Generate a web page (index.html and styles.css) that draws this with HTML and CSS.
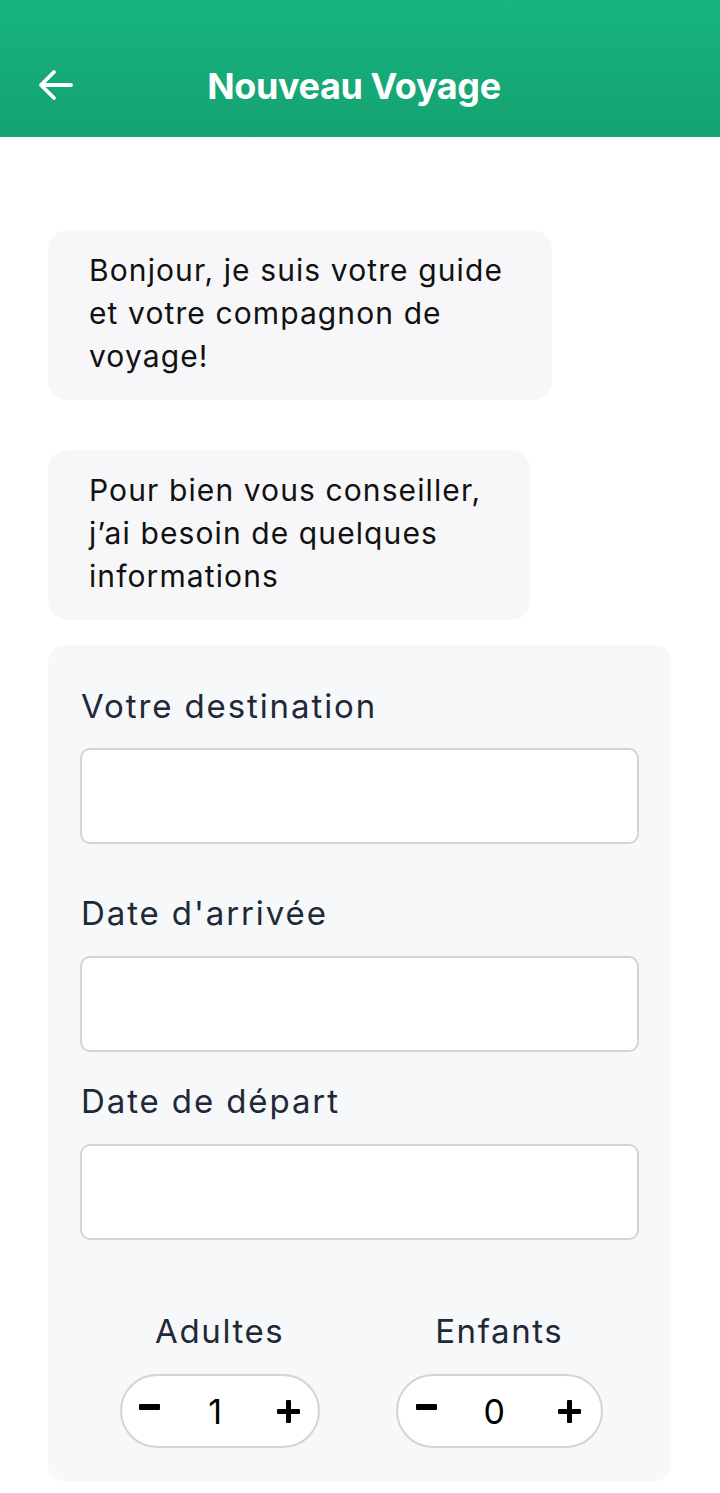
FILE: index.html
```html
<!DOCTYPE html>
<html lang="fr">
<head>
    <meta charset="UTF-8">
    <meta name="viewport" content="width=device-width, initial-scale=1.0">
    <title>Nouveau Voyage</title>
    <link rel="stylesheet" href="styles.css">
</head>
<body>
    <header class="topbar">
        <button class="back" aria-label="Retour">
            <svg width="36" height="32" viewBox="0 0 36 32" fill="none" stroke="#fff" stroke-width="3.8" stroke-linecap="round" stroke-linejoin="round">
                <path d="M33 16H4"/>
                <path d="M16 3L3 16l13 13"/>
            </svg>
        </button>
        <h1>Nouveau Voyage</h1>
    </header>

    <main class="content">
        <div class="bubble">Bonjour, je suis votre guide<br>et votre compagnon de<br>voyage!</div>
        <div class="bubble">Pour bien vous conseiller,<br>j’ai besoin de quelques<br>informations</div>

        <form class="card">
            <label class="field-label first" for="destination">Votre destination</label>
            <input class="field" type="text" id="destination">

            <label class="field-label second" for="arrivee">Date d'arrivée</label>
            <input class="field" type="text" id="arrivee">

            <label class="field-label" for="depart">Date de départ</label>
            <input class="field" type="text" id="depart">

            <div class="counters">
                <div class="counter">
                    <span class="counter-label">Adultes</span>
                    <div class="stepper">
                        <button type="button" class="step minus" aria-label="Moins">
                            <svg width="21" height="6" viewBox="0 0 21 6"><rect width="21" height="6" rx="1" fill="#000"/></svg>
                        </button>
                        <span class="value">1</span>
                        <button type="button" class="step" aria-label="Plus">
                            <svg width="23" height="23" viewBox="0 0 23 23" fill="#000"><rect x="9" y="0" width="5" height="23" rx="1"/><rect x="0" y="9" width="23" height="5" rx="1"/></svg>
                        </button>
                    </div>
                </div>
                <div class="counter">
                    <span class="counter-label">Enfants</span>
                    <div class="stepper wide">
                        <button type="button" class="step minus" aria-label="Moins">
                            <svg width="21" height="6" viewBox="0 0 21 6"><rect width="21" height="6" rx="1" fill="#000"/></svg>
                        </button>
                        <span class="value">0</span>
                        <button type="button" class="step" aria-label="Plus">
                            <svg width="23" height="23" viewBox="0 0 23 23" fill="#000"><rect x="9" y="0" width="5" height="23" rx="1"/><rect x="0" y="9" width="23" height="5" rx="1"/></svg>
                        </button>
                    </div>
                </div>
            </div>
        </form>
    </main>
</body>
</html>
```

FILE: styles.css
```css
body {
    margin: 0;
    font-family: Inter, "Noto Sans", sans-serif;
    background-color: #fff;
    color: #111;
}
.topbar {
    height: 137px;
    background: linear-gradient(180deg, #18b47f 0%, #14a270 100%);
    display: flex;
    align-items: center;
    position: relative;
    padding-top: 32px;
    box-sizing: border-box;
}
.back {
    background: none;
    border: none;
    padding: 0;
    margin-left: 38px;
    display: flex;
    cursor: pointer;
}
.topbar h1 {
    position: absolute;
    left: 0;
    right: 12px;
    top: 34px;
    bottom: 0;
    margin: 0;
    display: flex;
    align-items: center;
    justify-content: center;
    color: #fff;
    font-size: 36px;
    font-weight: 700;
    letter-spacing: -0.4px;
    pointer-events: none;
}
.content {
    padding: 93px 49px 14px 48px;
    display: flex;
    flex-direction: column;
    align-items: flex-start;
}
.bubble {
    background-color: #f7f7f9;
    border-radius: 20px;
    padding: 19px 49px 22px 41px;
    font-size: 30px;
    line-height: 43px;
    letter-spacing: 1.1px;
    color: #111;
    margin-bottom: 50px;
    width: fit-content;
}
.bubble:nth-of-type(2) {
    margin-bottom: 25px;
}
.card {
    align-self: stretch;
    background-color: #f7f8fa;
    border-radius: 16px;
    padding: 33px 32px 33px 32px;
    display: flex;
    flex-direction: column;
}
.field-label {
    font-size: 33px;
    line-height: 48px;
    letter-spacing: 1.9px;
    color: #1f2937;
    margin: 25px 0 19px 1px;
}
.field-label.first {
    margin-top: 4px;
    margin-bottom: 18px;
}
.field-label.second {
    margin-top: 45px;
}
.field {
    height: 96px;
    box-sizing: border-box;
    border: 2px solid #d4d4d8;
    border-radius: 10px;
    background-color: #fff;
    font-size: 28px;
    padding: 0 20px;
}
.counters {
    display: grid;
    grid-template-columns: 1fr 1fr;
    margin-top: 67px;
}
.counter {
    display: flex;
    flex-direction: column;
    align-items: center;
}
.counter-label {
    font-size: 33px;
    line-height: 48px;
    letter-spacing: 1.6px;
    color: #1f2937;
    margin-bottom: 19px;
}
.stepper {
    width: 200px;
    height: 74px;
    box-sizing: border-box;
    border: 2px solid #d4d4d8;
    border-radius: 37px;
    background-color: #fff;
    display: flex;
    align-items: center;
    justify-content: space-between;
    padding: 0 18px 0 17px;
}
.stepper.wide {
    width: 207px;
    padding: 0 20px 0 18px;
}
.step {
    background: none;
    border: none;
    padding: 0;
    display: flex;
    align-items: center;
    justify-content: center;
    cursor: pointer;
}
.step.minus {
    margin-top: -8px;
}
.value {
    font-size: 34px;
    color: #000;
    margin-left: -6px;
}
```
